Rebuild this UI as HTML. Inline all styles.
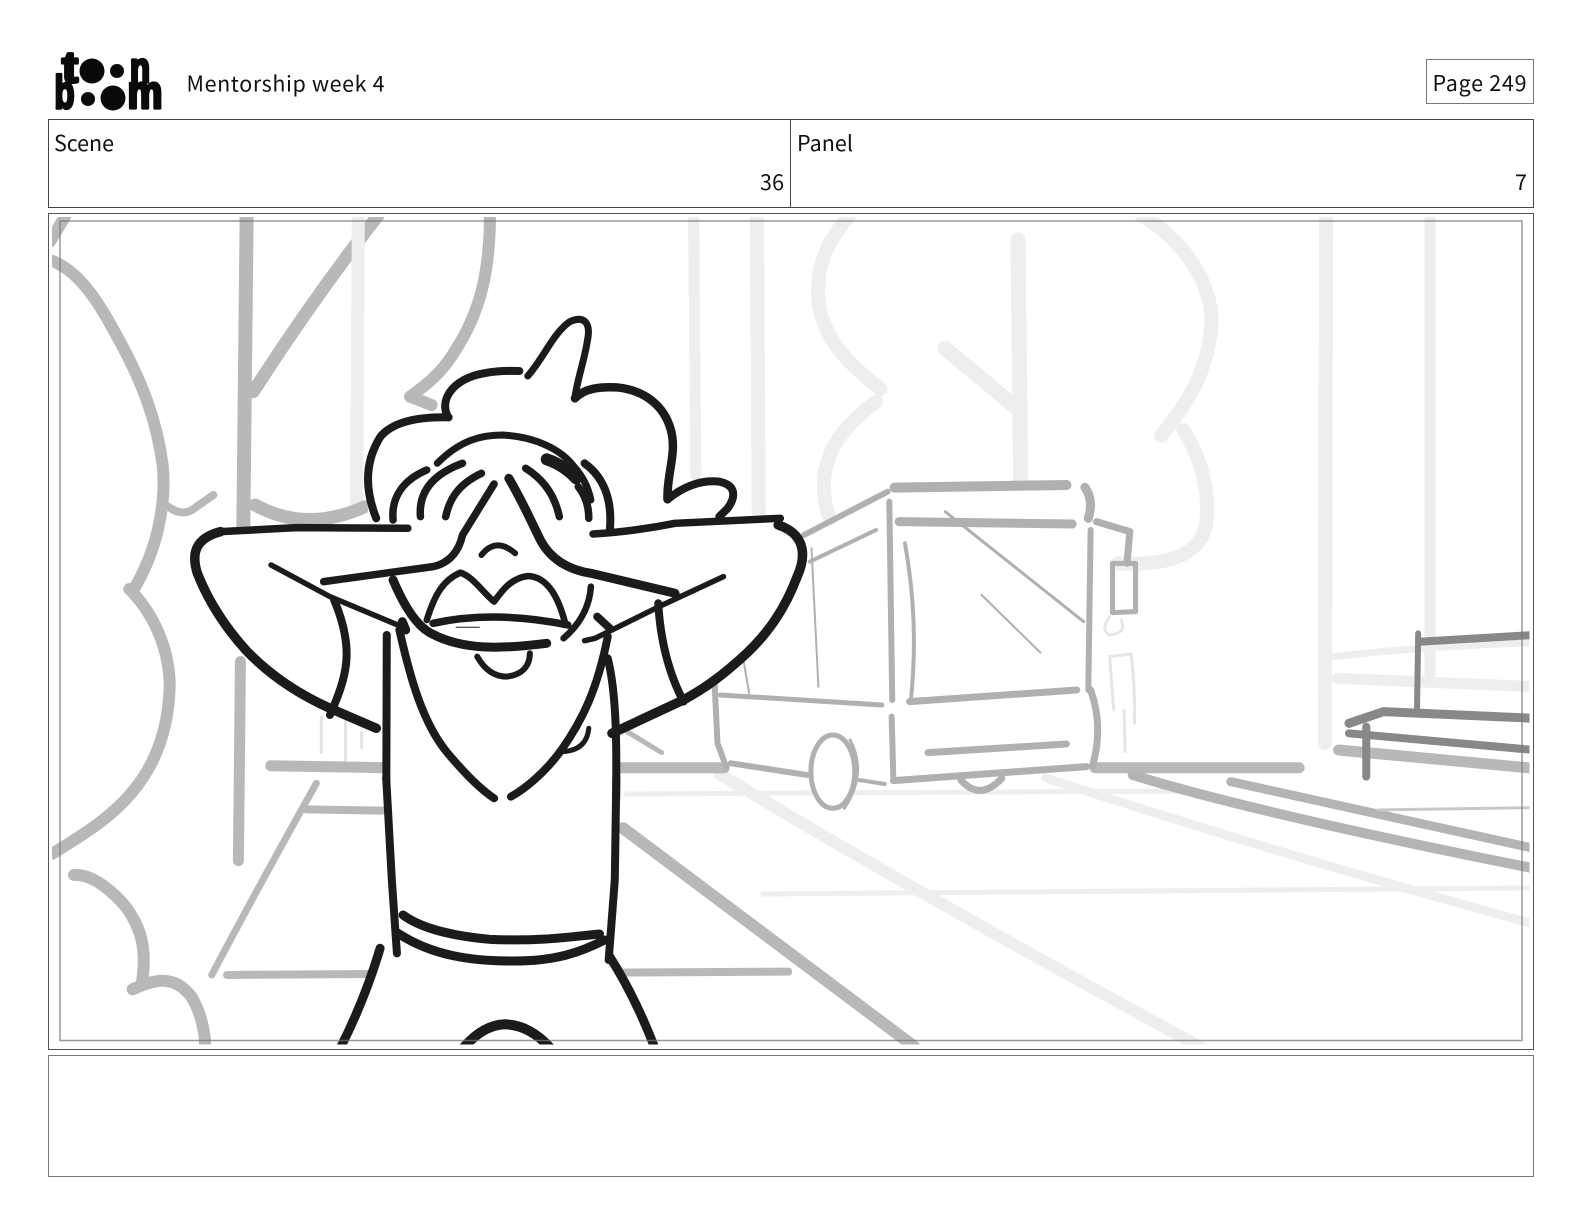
<!DOCTYPE html>
<html><head><meta charset="utf-8"><title>Mentorship week 4 - Page 249</title>
<style>
html,body{margin:0;padding:0;background:#fff;width:1584px;height:1224px;overflow:hidden}
svg{display:block;position:absolute;left:0;top:0}
path,ellipse{vector-effect:non-scaling-stroke}
.s path,.s ellipse{fill:none;stroke-linecap:round;stroke-linejoin:round}
text{font-family:"Noto Sans CJK JP","Liberation Sans",sans-serif;font-size:21.5px;fill:#111}
.l{font-family:"Liberation Sans",sans-serif;font-weight:700;fill:#0a0a0a;stroke:#0a0a0a;stroke-width:3.2;stroke-linejoin:round}
</style></head><body>
<svg width="1584" height="1224" viewBox="0 0 1584 1224" xmlns="http://www.w3.org/2000/svg">
<defs><clipPath id="c"><rect x="52" y="217" width="1477.5" height="827.5"/></clipPath></defs>

<!-- logo -->
<g>
<text class="l" x="62" y="82" style="font-size:44px" textLength="16" lengthAdjust="spacingAndGlyphs">t</text>
<circle cx="92" cy="71" r="12.5" fill="#0a0a0a"/><circle cx="117" cy="71" r="7" fill="#0a0a0a"/>
<text class="l" x="130" y="82" style="font-size:42px" textLength="20" lengthAdjust="spacingAndGlyphs">n</text>
<text class="l" x="54.5" y="108" style="font-size:46px" textLength="20" lengthAdjust="spacingAndGlyphs">b</text>
<circle cx="88" cy="99" r="7" fill="#0a0a0a"/><circle cx="113" cy="98" r="12.5" fill="#0a0a0a"/>
<text class="l" x="127.5" y="108" style="font-size:46px" textLength="35" lengthAdjust="spacingAndGlyphs">m</text>
</g>

<text x="186.5" y="91.5" textLength="198" lengthAdjust="spacing">Mentorship week 4</text>
<rect x="1426.5" y="59.5" width="107" height="44" fill="none" stroke="#777" stroke-width="1"/>
<text x="1432.5" y="91" textLength="94" lengthAdjust="spacing">Page 249</text>

<rect x="48.5" y="119.5" width="1485" height="88" fill="none" stroke="#444" stroke-width="1"/>
<path d="M790.5 119.5V207.5" stroke="#444" stroke-width="1"/>
<text x="54" y="151" textLength="60" lengthAdjust="spacing">Scene</text>
<text x="760" y="190" textLength="24" lengthAdjust="spacing">36</text>
<text x="797" y="151" textLength="56" lengthAdjust="spacing">Panel</text>
<text x="1515" y="190">7</text>

<rect x="48.5" y="213.5" width="1485" height="836" fill="none" stroke="#555" stroke-width="1"/>
<rect x="48.5" y="1055.5" width="1485" height="121" fill="none" stroke="#777" stroke-width="1"/>

<g clip-path="url(#c)">
<!-- light background strokes top right -->
<g class="s" stroke="#eeeeee" stroke-width="14" transform="translate(670 205) scale(.5612 .3333)">
<path stroke-width="11" d="M42 30L46 810"/>
<path d="M155 30L158 940"/>
<path d="M320 30C270 130 262 200 264 280C270 400 320 480 375 552"/>
<path d="M367 590C320 650 285 710 275 810C272 880 280 920 285 940"/>
<path stroke-width="15" d="M620 105L625 830"/>
<path stroke-width="15" d="M490 430L620 612"/>
<path d="M840 30C920 110 965 240 965 350C960 500 920 600 875 692"/>
<path d="M915 675C950 770 962 870 955 960C945 1040 900 1085 798 1075"/>
</g>
<g class="s" stroke="#eeeeee" stroke-width="14">
<path d="M1326 212L1325 743"/>
<path stroke-width="11" d="M1430 212L1430 673"/>
</g>
<g class="s" stroke="#eeeeee" stroke-width="14" transform="translate(680 450) scale(.5767 .3333)">
<path stroke-width="7" d="M1135 620Q1280 590 1480 578"/>
<path stroke-width="11" d="M1140 685L1480 710"/>
<path stroke="#e6e6e6" stroke-width="3" d="M745 500Q728 540 745 555Q775 550 765 510"/>
<path stroke="#e6e6e6" stroke-width="3" d="M745 620L782 612Q790 720 788 820M745 620L752 780M770 780L772 905"/>
</g>
<g class="s" stroke="#eeeeee" transform="scale(1.0102)">
<path stroke-width="5" d="M620 786L1170 783"/>
<path stroke-width="5" d="M755 885L1512 879"/>
<path stroke-width="12" d="M712 766Q900 880 1195 1040"/>
<path stroke-width="9" d="M1035 770Q1280 850 1520 915"/>
<path stroke-width="3" stroke="#e4e4e4" d="M318 710V745M342 710V758M358 725V740"/>
</g>

<!-- mid gray strokes left -->
<g class="s" stroke="#b8b8b8" stroke-width="12" transform="translate(40 205) scale(.3333)">
<path d="M30 165C130 200 190 320 240 410C300 520 350 640 368 780C380 900 350 1040 280 1155"/>
<path d="M30 110L75 35"/>
<path stroke-width="8" d="M385 905Q430 940 470 905L520 870"/>
<path stroke-width="14" d="M620 30L610 970"/>
<path stroke-width="13" d="M1015 30Q820 280 640 560"/>
<path stroke="#eeeeee" stroke-width="13" d="M955 30L950 900"/>
<path stroke-width="13" d="M645 900Q800 985 975 905"/>
<path d="M1350 30C1350 200 1320 320 1250 430C1210 500 1160 540 1110 575L1175 600"/>
</g>
<g class="s" stroke="#b8b8b8" stroke-width="12" transform="scale(1.0102)">
<path d="M128 583C150 605 168 640 168 680C165 780 100 815 52 845"/>
<path stroke-width="11" d="M238 655L236 852"/>
<path stroke-width="11" d="M268 758L385 760"/>
<path stroke-width="11" d="M610 760L717 760"/>
<path stroke-width="11" d="M1084 760L1286 760"/>
<path stroke-width="5" d="M617 722L655 745"/>
<path stroke-width="12" d="M617 820L905 1036"/>
</g>
<g class="s" stroke="#b8b8b8" stroke-width="12" transform="translate(0 780) scale(.5102 .3333)">
<path d="M145 285C190 280 245 370 255 400C285 470 285 540 278 610"/>
<path d="M260 628C300 600 340 580 375 650C395 700 402 760 402 800"/>
<path stroke-width="7" d="M415 585Q510 310 620 10"/>
<path stroke-width="8" d="M600 88L760 92"/>
<path stroke-width="8" d="M445 585L730 582"/>
<path stroke-width="8" d="M1180 578L1545 575"/>
</g>

<!-- bus and bench -->
<g class="s" stroke="#b0b0b0" stroke-width="5" transform="translate(680 450) scale(.5767 .3333)">
<path stroke-width="10" d="M372 113L670 105"/>
<path stroke-width="9" d="M702 112Q718 150 708 205"/>
<path stroke-width="9" d="M380 215L680 222"/>
<path stroke-width="6" d="M215 255L360 125"/>
<path stroke-width="4" d="M225 335L340 240"/>
<path stroke-width="6" d="M363 155L368 750"/>
<path stroke-width="4" d="M390 280Q415 520 400 755"/>
<path stroke-width="3" d="M460 185L700 515"/>
<path stroke-width="2" d="M523 435L625 608"/>
<path stroke-width="6" d="M712 240L708 720"/>
<path stroke-width="7" d="M722 215L780 245L775 340"/>
<path stroke-width="5" d="M750 340L790 340L790 485L750 488Z"/>
<path stroke-width="2" d="M228 295L240 710"/>
<path stroke-width="2" d="M110 630L120 730"/>
<path stroke-width="5" d="M70 735L350 765"/>
<path stroke-width="7" d="M398 755L688 720"/>
<path stroke-width="6" d="M60 700L65 880L80 950"/>
<path stroke-width="7" d="M712 720Q735 830 715 950"/>
<path stroke-width="6" d="M367 800L370 990"/>
<path stroke-width="7" d="M370 992L705 950"/>
<path stroke-width="7" d="M430 908L670 882"/>
<path stroke-width="6" d="M88 940L220 975"/>
<ellipse cx="265" cy="965" rx="38" ry="110" stroke-width="5" style="fill:#fff"/>
<path stroke-width="3" d="M295 870Q325 970 285 1075"/>
<path stroke-width="4" d="M310 990L355 1002"/>
<path stroke-width="7" d="M487 990Q520 1055 558 985"/>
<path stroke="#b4b4b4" stroke-width="10" d="M785 975Q1000 1090 1480 1255"/>
<path stroke="#b4b4b4" stroke-width="9" d="M955 995L1480 1195"/>
<path stroke="#c8c8c8" stroke-width="3" d="M1210 1080L1480 1073"/>
<path stroke="#b8b8b8" stroke-width="11" d="M1142 900L1480 955"/>
<path stroke="#888" stroke-width="6" d="M1280 550L1278 780"/>
<path stroke="#888" stroke-width="8" d="M1285 575L1480 555"/>
<path stroke="#888" stroke-width="9" d="M1160 820L1220 785L1480 805"/>
<path stroke="#888" stroke-width="8" d="M1160 850L1480 900"/>
<path stroke="#888" stroke-width="8" d="M1190 830L1190 980"/>
</g>

<!-- white silhouette -->
<path fill="#fff" transform="translate(170 300) scale(.4209 .3333)" d="M120 695L470 685L470 520L530 370L660 340L720 225L850 215L970 55L975 260L1130 285L1195 440L1180 590L1330 560L1310 660L1450 655L1500 720L1450 930L1220 1200L1050 1300L1060 1500L1060 2000L510 2000L510 1270L380 1225L170 1040L60 780Z"/>
<path fill="#fff" transform="translate(0 780) scale(.5102 .3333)" d="M745 505L670 800L1285 800L1195 530Z"/>

<!-- character -->
<g class="s" stroke="#1b1b1b" stroke-width="8" transform="translate(170 300) scale(.4209 .3333)">
<path d="M490 655C460 560 465 480 500 410C530 365 590 350 662 352"/>
<path d="M660 350C640 300 670 250 720 228C760 212 800 212 830 213"/>
<path stroke-width="7" d="M850 228C890 170 910 100 950 65C985 45 1000 70 992 120C985 180 965 250 962 295"/>
<path stroke-width="8.5" d="M962 295C985 265 1020 260 1060 262C1130 270 1175 320 1190 390C1205 460 1180 520 1182 598"/>
<path d="M1182 598C1230 550 1270 540 1305 545C1345 555 1345 590 1325 625L1305 650"/>
<path stroke-width="7.5" d="M120 695L300 683L565 685"/>
<path stroke-width="9.5" d="M120 695C60 715 50 760 65 820C90 900 130 980 180 1050C240 1130 310 1185 380 1225L490 1285"/>
<path stroke-width="5.5" d="M240 795L380 890L560 985"/>
<path stroke-width="8" d="M390 900C440 1050 420 1130 380 1245"/>
<path stroke-width="7.5" d="M1005 702Q1100 695 1200 670L1450 655"/>
<path stroke-width="9.5" d="M1445 675C1505 700 1515 760 1490 830C1460 930 1420 1000 1370 1060C1310 1130 1270 1165 1220 1200L1050 1300"/>
<path stroke-width="5.5" d="M1315 830L1170 915L1010 1015L985 1022"/>
<path stroke-width="8" d="M1160 910C1165 1020 1185 1120 1220 1205"/>
<path stroke-width="7" d="M635 490C690 420 740 405 790 405C870 410 930 450 960 500C985 535 995 570 1000 600"/>
<path stroke-width="12" d="M895 478Q935 495 965 535"/>
<path stroke-width="8" d="M985 490C1040 540 1050 620 1045 690"/>
<path stroke-width="7.5" d="M530 660C525 590 555 540 610 510"/>
<path stroke-width="7.5" d="M595 650C590 570 630 520 695 490"/>
<path stroke-width="7.5" d="M655 650C665 590 690 550 740 520"/>
<path stroke-width="7.5" d="M845 505C890 540 915 590 925 650"/>
<path stroke-width="7.5" d="M970 560Q995 600 995 655"/>
<path stroke-width="7.5" d="M770 552L695 705C685 760 660 790 625 800L365 845"/>
<path stroke-width="9" d="M805 535C840 610 860 670 880 720C905 780 950 810 1000 820L1200 880"/>
<path stroke-width="6" d="M740 765Q775 710 820 760"/>
<path stroke-width="6.5" d="M610 960C630 880 650 840 690 818C720 830 745 880 770 905C790 870 810 835 850 828C900 830 925 900 940 975"/>
<path stroke-width="7.5" d="M625 970Q770 930 945 975"/>
<path stroke-width="1" d="M680 982L735 982"/>
<path stroke-width="9" d="M530 840C560 930 590 980 620 1000C700 1055 800 1045 895 1030"/>
<path stroke-width="6.5" d="M1000 860Q995 950 935 1015"/>
<path stroke-width="6" d="M730 1070C750 1115 775 1130 800 1130C835 1125 855 1100 855 1060"/>
<path stroke-width="9" d="M552 965L560 990"/>
<path stroke-width="8" d="M1015 950L1045 985"/>
<path stroke-width="8" d="M515 1005L514 1440"/>
<path stroke-width="8" d="M545 990C570 1130 600 1270 660 1360C700 1420 740 1470 770 1495"/>
<path stroke-width="8" d="M1040 1010C1015 1170 980 1260 930 1350C890 1420 840 1470 810 1490"/>
<path stroke-width="8" d="M1040 1075C1065 1200 1060 1400 1060 1500"/>
<path stroke-width="5" d="M995 1285Q990 1350 935 1355"/>
</g>
<g class="s" stroke="#1b1b1b" stroke-width="8" transform="translate(0 780) scale(.5102 .3333)">
<path d="M757 -5L768 300L778 520"/>
<path d="M1208 -5L1205 300L1193 540"/>
<path stroke-width="9" d="M790 405C830 450 900 470 960 478C1060 485 1120 470 1175 462"/>
<path stroke-width="9" d="M780 460C850 530 930 543 1000 543C1090 545 1140 515 1185 480"/>
<path stroke-width="9" d="M745 505Q715 660 665 810"/>
<path stroke-width="9" d="M1195 530Q1245 650 1285 810"/>
<path stroke-width="10" d="M905 810Q945 735 990 733Q1040 735 1082 810"/>
</g>
</g>

<rect x="60" y="221" width="1462" height="819.5" fill="none" stroke="#777" stroke-opacity=".75" stroke-width="1.5"/>
</svg>
</body></html>
